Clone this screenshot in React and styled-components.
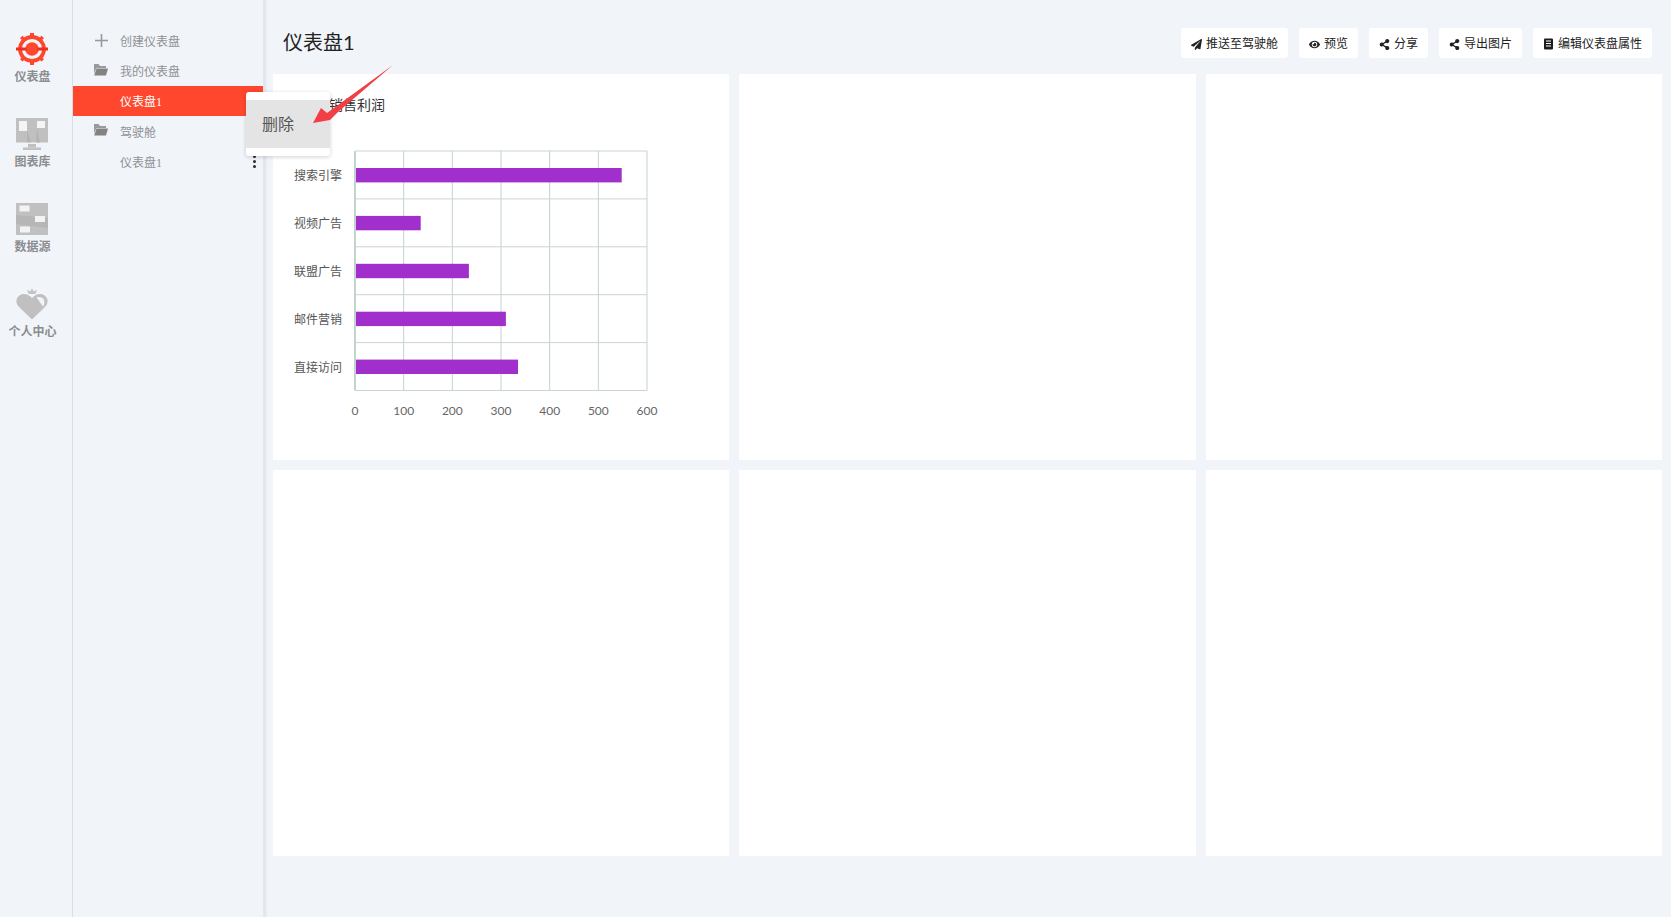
import React from "react";
import styled, { createGlobalStyle } from "styled-components";
import { FaPaperPlane, FaEye, FaShareAlt } from "react-icons/fa";

const Global = createGlobalStyle`
  html, body { margin: 0; padding: 0; height: 100%; background: #f1f4f9; overflow: hidden; }
  body { font-family: Lato, "Noto Sans CJK SC", "Noto Sans", sans-serif; }
  #root { height: 100%; }
  * { box-sizing: border-box; }
`;

const Page = styled.div`display: flex; width: 1671px; height: 917px; position: relative; background: #f1f4f9;`;

const Rail = styled.nav`
  width: 73px; flex: none; border-right: 1px solid #d9dee7;
  padding: 33px 7px 0 0; display: flex; flex-direction: column; align-items: center; gap: 33px;
`;
const RailItem = styled.div`display: flex; flex-direction: column; align-items: center; gap: 3px; height: 52px; svg { flex: none; margin-bottom: 1px; }`;
const RailLabel = styled.span`font-size: 12px; line-height: 16px; font-weight: 700; color: #8b8d90; white-space: nowrap;`;

const Side = styled.aside`
  width: 192px; flex: none; padding-top: 25px; border-right: 2px solid #e3e6ea;
  box-shadow: 1px 0 2px rgba(0,0,0,.08);
`;
const Row = styled.div`
  height: 30.4px; display: flex; align-items: center; position: relative;
  padding-left: ${p => p.$indent ? 47 : 21}px; gap: 11px;
  font-size: 12px; color: ${p => p.$active ? "#fff" : "#8f9296"};
  background: ${p => p.$active ? "#ff472e" : "transparent"};
`;
const Digit = styled.span`font-family: "Liberation Serif", serif; font-size: 12px;`;
const RowIcon = styled.span`width: 15px; height: 14px; display: flex; align-items: center; justify-content: center;`;
const FolderIcon = styled.svg`margin-top: -3px; margin-left: -2px;`;
const Kebab = styled.span`
  position: absolute; right: 7px; top: 8px; display: flex; flex-direction: column; gap: 2px;
  i { width: 3px; height: 3px; border-radius: 50%; background: #2a2c30; display: block; }
`;

const Main = styled.main`flex: 1; min-width: 0; padding: 0 9px 0 8px;`;
const Header = styled.header`height: 74px; display: flex; justify-content: space-between; align-items: flex-start; padding: 28px 10px 0 10px;`;
const Title = styled.h1`margin: 1px 0 0; font-size: 20px; line-height: 26px; font-weight: 400; color: #222;`;
const Actions = styled.div`display: flex; gap: 11px;`;
const ActionButton = styled.button`
  height: 30px; padding: 2px 10px 0; border: 0; border-radius: 3px; background: #fff; color: #222;
  font: 400 12px/28px Lato, "Noto Sans CJK SC", sans-serif;
  display: flex; align-items: center; gap: 4px; white-space: nowrap;
  svg { font-size: 11px; flex: none; }
`;
const Grid = styled.section`display: grid; grid-template-columns: repeat(3, 456.33px); grid-auto-rows: 386px; gap: 10px;`;
const Card = styled.article`background: #fff;`;
const CardTitle = styled.div`height: 46px; padding: 21px 0 0 56px; font-size: 14px; line-height: 20px; color: #333;`;

const Menu = styled.div`
  position: absolute; left: 246px; top: 92px; width: 84px; height: 64px; padding: 8px 0;
  background: #fff; border-radius: 3px; box-shadow: 0 1px 4px rgba(0,0,0,.18); z-index: 2;
`;
const MenuItem = styled.div`height: 48px; line-height: 48px; padding-left: 16px; background: #e4e4e4; color: #555; font-size: 16px;`;
const Arrow = styled.svg`position: absolute; left: 300px; top: 60px; z-index: 3;`;

const ChartSvg = styled.svg`display: block;`;

const cats = [["搜索引擎", 548], ["视频广告", 135], ["联盟广告", 234], ["邮件营销", 310], ["直接访问", 335]];
const X0 = 82, Y0 = 31, W = 292, H = 239.5, UNIT = W / 600, BAND = H / 5;

function Chart() {
  const ticks = [0, 100, 200, 300, 400, 500, 600];
  return (
    <ChartSvg width="456" height="340" viewBox="0 0 456 340">
      {ticks.map(t => (
        <line key={t} x1={X0 + t * UNIT} x2={X0 + t * UNIT} y1={Y0} y2={Y0 + H} stroke="#c3d3ce" strokeWidth={t === 0 ? 2 : 1} />
      ))}
      {[0, 1, 2, 3, 4, 5].map(i => (
        <line key={i} x1={X0} x2={X0 + W} y1={Y0 + i * BAND} y2={Y0 + i * BAND} stroke="#c7d6d1" strokeWidth="1" />
      ))}
      {cats.map(([n, v], i) => (
        <g key={n}>
          <rect x={X0 + 1} y={Y0 + i * BAND + 17} width={v * UNIT - 1} height="14.4" fill="#a12fcb" />
          <text x={X0 - 13} y={Y0 + i * BAND + 29} textAnchor="end" fontSize="12" fill="#555" fontFamily='"Noto Sans CJK SC", sans-serif'>{n}</text>
        </g>
      ))}
      {ticks.map(t => (
        <text key={t} x={X0 + t * UNIT} y={295} textAnchor="middle" fontSize="12" fill="#666" fontFamily="Lato, sans-serif">{t}</text>
      ))}
    </ChartSvg>
  );
}

const TargetIcon = () => (
  <svg width="32" height="32" viewBox="0 0 32 32">
    <g fill="#ff472e">
      <rect x="14" y="0" width="4" height="5" />
      <rect x="14" y="27" width="4" height="5" />
      <rect x="4.500" y="3.500" width="3.500" height="3.500" transform="rotate(45 6.500 5.500)" />
      <rect x="23.500" y="3.500" width="3.500" height="3.500" transform="rotate(45 25.500 5.500)" />
      <rect x="4.500" y="24.500" width="3.500" height="3.500" transform="rotate(45 6.500 26.500)" />
      <rect x="23.500" y="24.500" width="3.500" height="3.500" transform="rotate(45 25.500 26.500)" />
    </g>
    <circle cx="16" cy="16" r="12" fill="none" stroke="#ff472e" strokeWidth="3.800" />
    <circle cx="16" cy="16" r="6.800" fill="#ff472e" />
    <rect x="0" y="14.500" width="32" height="3" fill="#e9301c" />
    <circle cx="16" cy="16" r="5.500" fill="#ff472e" />
  </svg>
);
const ChartIcon = () => (
  <svg width="32" height="32" viewBox="0 0 32 32">
    <rect x="0" y="0" width="32" height="24.500" fill="#c0c0c0" />
    <polygon points="11,12 15,24.500 11,24.500" fill="#b4b4b4" />
    <polygon points="21,10 24,24.500 20,24.500" fill="#b4b4b4" />
    <rect x="3" y="3" width="8" height="10" fill="#f4f5f7" />
    <rect x="21" y="3" width="8" height="7" fill="#f4f5f7" />
    <rect x="12" y="26" width="8" height="3.500" fill="#c0c0c0" />
    <rect x="7" y="29.500" width="18" height="2.500" fill="#c0c0c0" />
  </svg>
);
const DataIcon = () => (
  <svg width="32" height="32" viewBox="0 0 32 32">
    <rect width="32" height="32" fill="#c0c0c0" />
    <polygon points="0,12 32,15 32,25 0,21" fill="#b6b6b6" />
    <rect x="3.500" y="2.500" width="10" height="6" fill="#f2f3f5" />
    <rect x="19" y="13" width="10" height="6" fill="#f2f3f5" />
    <rect x="4" y="23.500" width="10" height="6" fill="#f2f3f5" />
  </svg>
);
const HeartIcon = () => (
  <svg width="32" height="32" viewBox="0 0 32 32">
    <polygon points="12.500,6 11,1.500 14,3.500 16,0.500 18,3.500 21,1.500 19.500,6" fill="#c4c4c4" />
    <path d="M16 31 L3.500 19 C-1.500 14 1 6.500 8 6.500 C11 6.500 13.500 8 16 10.500 C18.500 8 21 6.500 24 6.500 C31 6.500 33.500 14 28.500 19 Z" fill="#c0c0c0" stroke="#c0c0c0" strokeLinejoin="round" />
    <path d="M20.500 9.500 C23 8.500 27 9 28 12 C28.800 14.500 28.300 16.500 27 18.500 Z" fill="#f1f4f9" />
  </svg>
);
const PlusIcon = () => (
  <svg width="13" height="13" viewBox="0 0 13 13"><path d="M6.500 0v13M0 6.500h13" stroke="#999" strokeWidth="1.600" /></svg>
);
const Folder = () => (
  <FolderIcon width="15" height="13" viewBox="0 0 15 13">
    <path d="M1 1h4.500L7 3h6v2H3.500L1 10.500Z" fill="#9a9a9a" />
    <path d="M3.500 5.500H15L13 12.500H1.200Z" fill="#828282" />
  </FolderIcon>
);
const BookIcon = () => (
  <svg width="11" height="12" viewBox="0 0 11 12">
    <rect x="1" y="0.500" width="9" height="11" rx="1" fill="#1c1c1c" />
    <path d="M3 3h5M3 5.500h5M3 8h5" stroke="#fff" strokeWidth="1" />
  </svg>
);

const railItems = [
  ["仪表盘", <TargetIcon />], ["图表库", <ChartIcon />], ["数据源", <DataIcon />], ["个人中心", <HeartIcon />],
];
const actions = [
  [<FaPaperPlane />, "推送至驾驶舱"], [<FaEye />, "预览"], [<FaShareAlt />, "分享"], [<FaShareAlt />, "导出图片"], [<BookIcon />, "编辑仪表盘属性"],
];

export default function App() {
  return (
    <Page>
      <Global />
      <Rail>
        {railItems.map(([n, i]) => <RailItem key={n}>{i}<RailLabel>{n}</RailLabel></RailItem>)}
      </Rail>
      <Side>
        <Row><RowIcon><PlusIcon /></RowIcon>创建仪表盘</Row>
        <Row><RowIcon><Folder /></RowIcon>我的仪表盘</Row>
        <Row $indent $active><span>仪表盘<Digit>1</Digit></span></Row>
        <Row><RowIcon><Folder /></RowIcon>驾驶舱</Row>
        <Row $indent><span>仪表盘<Digit>1</Digit></span><Kebab><i /><i /><i /></Kebab></Row>
      </Side>
      <Main>
        <Header>
          <Title>仪表盘1</Title>
          <Actions>
            {actions.map(([ic, t]) => <ActionButton key={t}>{ic}{t}</ActionButton>)}
          </Actions>
        </Header>
        <Grid>
          <Card><CardTitle>销售利润</CardTitle><Chart /></Card>
          <Card /><Card /><Card /><Card /><Card />
        </Grid>
      </Main>
      <Menu><MenuItem>删除</MenuItem></Menu>
      <Arrow width="100" height="70" viewBox="0 0 100 70">
        <polygon points="93,5 38,52 30,60 13,63 21,48 27,53" fill="#f23f45" />
      </Arrow>
    </Page>
  );
}
